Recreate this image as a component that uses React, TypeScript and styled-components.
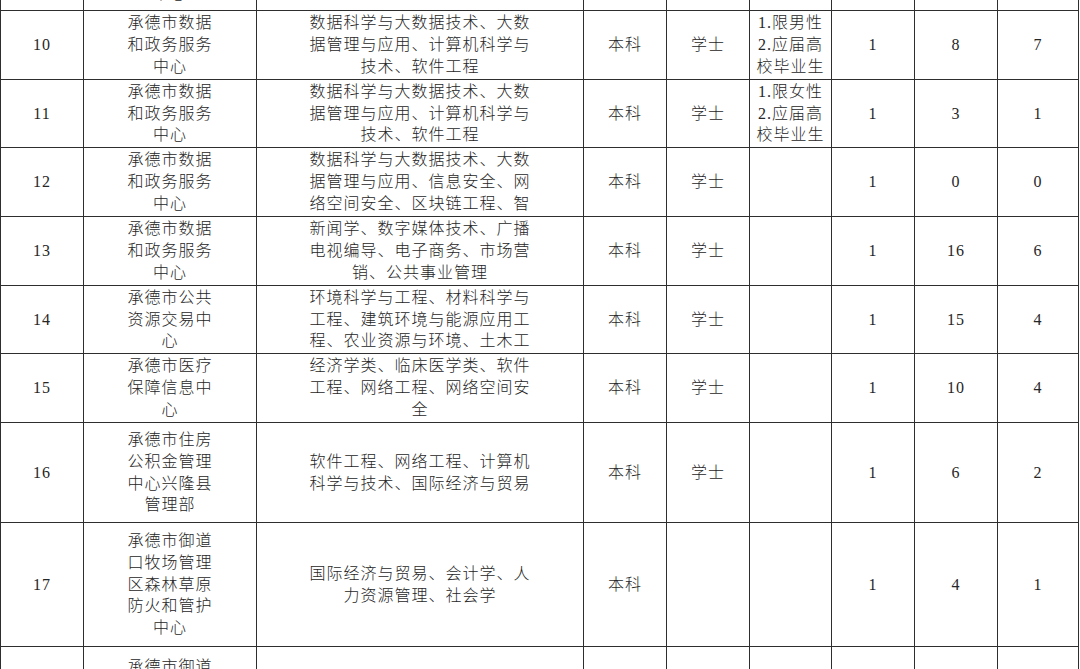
import React from "react";
import styled, { createGlobalStyle } from "styled-components";

const GlobalStyle = createGlobalStyle`
    html, body {
        margin: 0;
        padding: 0;
        background: #ffffff;
    }
`;

type Job = {
    no: string;
    unit: string;
    major: string;
    edu: string;
    degree: string;
    note: string;
    count: string;
    applied: string;
    passed: string;
    height: number;
};

// 第一行只露出底部几像素，最后一行只露出第一行字
const jobs: Job[] = [
    {
        no: "",
        unit: "承德市数据\n和政务服务\n中心",
        major: "",
        edu: "",
        degree: "",
        note: "",
        count: "",
        applied: "",
        passed: "",
        height: 77,
    },
    {
        no: "10",
        unit: "承德市数据\n和政务服务\n中心",
        major: "数据科学与大数据技术、大数\n据管理与应用、计算机科学与\n技术、软件工程",
        edu: "本科",
        degree: "学士",
        note: "1.限男性\n2.应届高\n校毕业生",
        count: "1",
        applied: "8",
        passed: "7",
        height: 69,
    },
    {
        no: "11",
        unit: "承德市数据\n和政务服务\n中心",
        major: "数据科学与大数据技术、大数\n据管理与应用、计算机科学与\n技术、软件工程",
        edu: "本科",
        degree: "学士",
        note: "1.限女性\n2.应届高\n校毕业生",
        count: "1",
        applied: "3",
        passed: "1",
        height: 68,
    },
    {
        no: "12",
        unit: "承德市数据\n和政务服务\n中心",
        major: "数据科学与大数据技术、大数\n据管理与应用、信息安全、网\n络空间安全、区块链工程、智",
        edu: "本科",
        degree: "学士",
        note: "",
        count: "1",
        applied: "0",
        passed: "0",
        height: 69,
    },
    {
        no: "13",
        unit: "承德市数据\n和政务服务\n中心",
        major: "新闻学、数字媒体技术、广播\n电视编导、电子商务、市场营\n销、公共事业管理",
        edu: "本科",
        degree: "学士",
        note: "",
        count: "1",
        applied: "16",
        passed: "6",
        height: 69,
    },
    {
        no: "14",
        unit: "承德市公共\n资源交易中\n心",
        major: "环境科学与工程、材料科学与\n工程、建筑环境与能源应用工\n程、农业资源与环境、土木工",
        edu: "本科",
        degree: "学士",
        note: "",
        count: "1",
        applied: "15",
        passed: "4",
        height: 68,
    },
    {
        no: "15",
        unit: "承德市医疗\n保障信息中\n心",
        major: "经济学类、临床医学类、软件\n工程、网络工程、网络空间安\n全",
        edu: "本科",
        degree: "学士",
        note: "",
        count: "1",
        applied: "10",
        passed: "4",
        height: 69,
    },
    {
        no: "16",
        unit: "承德市住房\n公积金管理\n中心兴隆县\n管理部",
        major: "软件工程、网络工程、计算机\n科学与技术、国际经济与贸易",
        edu: "本科",
        degree: "学士",
        note: "",
        count: "1",
        applied: "6",
        passed: "2",
        height: 100,
    },
    {
        no: "17",
        unit: "承德市御道\n口牧场管理\n区森林草原\n防火和管护\n中心",
        major: "国际经济与贸易、会计学、人\n力资源管理、社会学",
        edu: "本科",
        degree: "",
        note: "",
        count: "1",
        applied: "4",
        passed: "1",
        height: 124,
    },
    {
        no: "",
        unit: "承德市御道",
        major: "",
        edu: "",
        degree: "",
        note: "",
        count: "",
        applied: "",
        passed: "",
        height: 40,
    },
];

export default function App() {
    return (
        <Viewport>
            <GlobalStyle />
            <Sheet>
                {jobs.map((job, i) => (
                    <Row key={i} $height={job.height}>
                        <Cell>{job.no}</Cell>
                        <Cell>{job.unit}</Cell>
                        <Cell>{job.major}</Cell>
                        <Cell>{job.edu}</Cell>
                        <Cell>{job.degree}</Cell>
                        <Cell>{job.note}</Cell>
                        <Cell>{job.count}</Cell>
                        <Cell>{job.applied}</Cell>
                        <Cell>{job.passed}</Cell>
                    </Row>
                ))}
            </Sheet>
        </Viewport>
    );
}

const Viewport = styled.div`
    width: 1080px;
    height: 669px;
    overflow: hidden;
    background: #ffffff;
`;

const Sheet = styled.div`
    box-sizing: border-box;
    width: 1079px;
    margin-top: -66px;
    border-left: 1px solid #2e2e2e;
    font-family: "Liberation Serif", "Noto Sans CJK SC", serif;
    font-size: 16px;
    font-weight: 300;
    letter-spacing: 1px;
    line-height: 21.8px;
    color: #262626;
`;

const Row = styled.div<{ $height: number }>`
    box-sizing: border-box;
    display: grid;
    grid-template-columns: 83px 173px 327px 83px 83px 82px 83px 83px 81px;
    height: ${(p) => p.$height}px;
    border-bottom: 1px solid #2e2e2e;
`;

const Cell = styled.div`
    box-sizing: border-box;
    display: flex;
    align-items: center;
    justify-content: center;
    text-align: center;
    white-space: pre-line;
    overflow: hidden;
    border-right: 1px solid #2e2e2e;
`;
